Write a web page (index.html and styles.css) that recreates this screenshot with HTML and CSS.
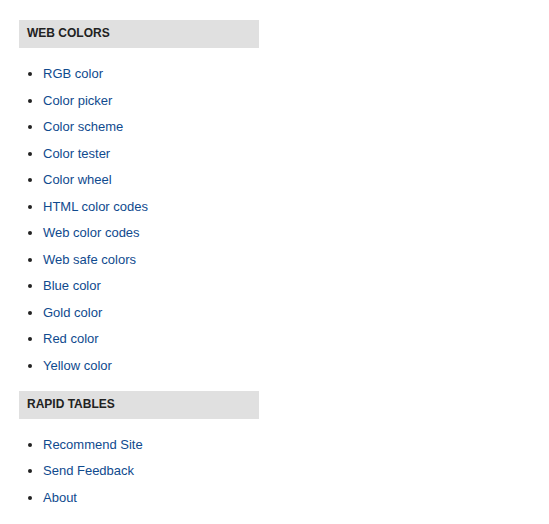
FILE: index.html
```html
<!DOCTYPE html>
<html>
<head>
<meta charset="utf-8">
<link rel="stylesheet" href="styles.css">
</head>
<body>
<div class="sidebar">
  <div class="box-title">WEB COLORS</div>
  <ul class="links">
    <li><a href="#">RGB color</a></li>
    <li><a href="#">Color picker</a></li>
    <li><a href="#">Color scheme</a></li>
    <li><a href="#">Color tester</a></li>
    <li><a href="#">Color wheel</a></li>
    <li><a href="#">HTML color codes</a></li>
    <li><a href="#">Web color codes</a></li>
    <li><a href="#">Web safe colors</a></li>
    <li><a href="#">Blue color</a></li>
    <li><a href="#">Gold color</a></li>
    <li><a href="#">Red color</a></li>
    <li><a href="#">Yellow color</a></li>
  </ul>
  <div class="box-title">RAPID TABLES</div>
  <ul class="links">
    <li><a href="#">Recommend Site</a></li>
    <li><a href="#">Send Feedback</a></li>
    <li><a href="#">About</a></li>
  </ul>
</div>
</body>
</html>
```
FILE: styles.css
```css
html, body {
  margin: 0;
  padding: 0;
  background: #fff;
}
body {
  font-family: "Liberation Sans", Arial, sans-serif;
  color: #222;
}
.sidebar {
  width: 240px;
  padding: 20px 0 0 19px;
}
.box-title {
  background: #e0e0e0;
  height: 28px;
  line-height: 27px;
  padding: 0 8px;
  font-size: 12px;
  font-weight: bold;
  color: #222;
}
.links {
  margin: 13px 0 11px;
  padding: 0 0 0 24px;
  font-size: 13px;
  line-height: 26.55px;
}
.links a {
  color: #0f4a8e;
  text-decoration: none;
}
```
